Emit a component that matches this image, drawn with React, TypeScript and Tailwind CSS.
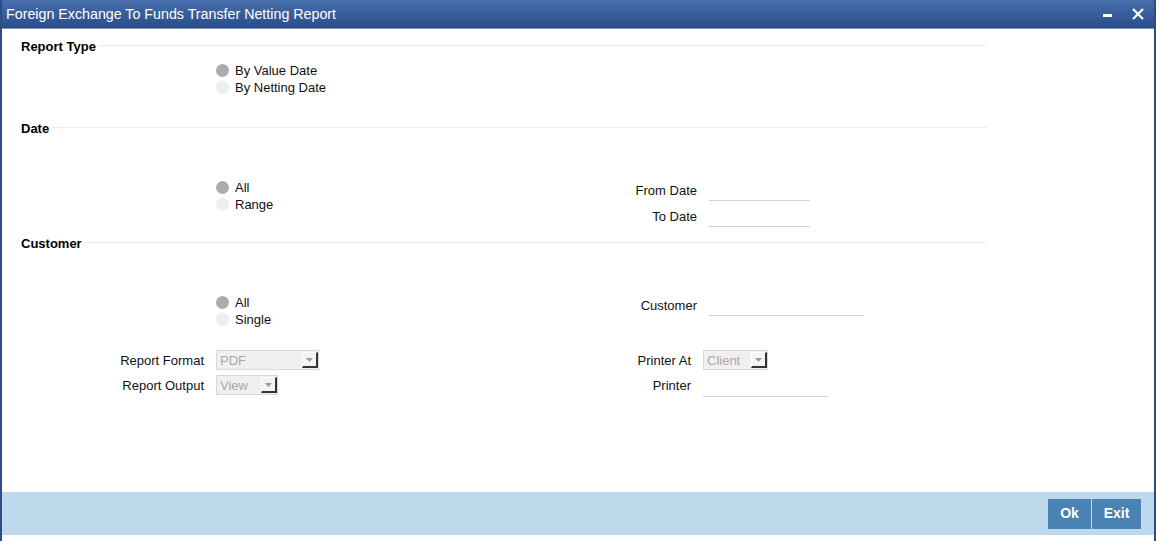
import React from "react";

const font = { fontFamily: '"Liberation Sans", Arial, sans-serif' };

function Heading({ text }: { text: string }) {
  return (
    <div className="flex items-center h-[18px] w-[985px] pl-[19px]">
      <span className="text-[13px] font-bold text-black leading-none whitespace-nowrap">{text}</span>
      <div className="flex-1 h-px bg-[#ececec] ml-[3px] -mt-[1px]" />
    </div>
  );
}

function Radio({ label, checked }: { label: string; checked?: boolean }) {
  return (
    <div className="flex items-center h-[17px]">
      <div className={`w-[13px] h-[13px] rounded-full ${checked ? "bg-[#acacac]" : "bg-[#eeeeee]"}`} />
      <span className="ml-[6px] text-[13px] text-[#111] leading-none whitespace-nowrap">{label}</span>
    </div>
  );
}

function Select({ value, width }: { value: string; width: string }) {
  return (
    <div className={`flex items-stretch h-[20px] ${width} bg-[#f0f0f0] border border-[#d8d8d8]`}>
      <div className="flex-1 flex items-center pl-[3px] text-[13px] text-[#a8a8a8] leading-none">{value}</div>
      <div className="w-[16px] my-[1px] mr-0 flex items-center justify-center bg-[#f4f4f4] border-l border-t border-l-white border-t-white border-r-2 border-b-2 border-r-[#333] border-b-[#333]">
        <svg width="7" height="4" viewBox="0 0 7 4"><path d="M0 0 L7 0 L3.5 4 Z" fill="#9a9a9a" /></svg>
      </div>
    </div>
  );
}

function FieldRow({ label, labelW, inputW }: { label: string; labelW: string; inputW: string }) {
  return (
    <div className="flex items-center h-[26px]">
      <div className={`${labelW} text-right text-[13px] text-[#111] leading-none whitespace-nowrap`}>{label}</div>
      <div className={`ml-[12px] ${inputW} h-[22px] border-b border-[#d2d2d2] -mt-[1px]`} />
    </div>
  );
}

export default function App() {
  return (
    <div style={font} className="w-[1156px] h-[541px] flex flex-col bg-white border-l-2 border-r-2 border-[#2b4c86] overflow-hidden">
      <div className="h-[29px] flex items-center justify-between bg-gradient-to-b from-[#4770ab] to-[#2a4c8a] border-b border-[#7f95b3] pl-[4px] pr-[10px] shrink-0">
        <span className="text-white text-[14.25px] leading-none whitespace-nowrap">Foreign Exchange To Funds Transfer Netting Report</span>
        <div className="flex items-center gap-[20px]">
          <div className="w-[9px] h-[3px] bg-white mt-[2px]" />
          <svg width="12" height="12" viewBox="0 0 12 12">
            <path d="M1 1 L11 11 M11 1 L1 11" stroke="white" strokeWidth="2.2" />
          </svg>
        </div>
      </div>

      <div className="flex-1 flex flex-col pt-[8px]">
        <Heading text="Report Type" />
        <div className="mt-[7px] pl-[214px]">
          <Radio label="By Value Date" checked />
          <Radio label="By Netting Date" />
        </div>

        <div className="mt-[23px]">
          <Heading text="Date" />
        </div>
        <div className="mt-[40px] flex">
          <div className="w-[598px] pl-[214px] pt-[2px]">
            <Radio label="All" checked />
            <Radio label="Range" />
          </div>
          <div>
            <FieldRow label="From Date" labelW="w-[97px]" inputW="w-[101px]" />
            <FieldRow label="To Date" labelW="w-[97px]" inputW="w-[101px]" />
          </div>
        </div>

        <div className="mt-[5px]">
          <Heading text="Customer" />
        </div>
        <div className="mt-[40px] flex">
          <div className="w-[598px] pl-[214px] pt-[2px]">
            <Radio label="All" checked />
            <Radio label="Single" />
          </div>
          <div>
            <FieldRow label="Customer" labelW="w-[97px]" inputW="w-[155px]" />
          </div>
        </div>

        <div className="mt-[20px] flex">
          <div className="w-[598px]">
            <div className="flex items-center h-[25px]">
              <div className="w-[202px] text-right text-[13px] text-[#111] leading-none">Report Format</div>
              <div className="ml-[12px] -mt-[1px]"><Select value="PDF" width="w-[103px]" /></div>
            </div>
            <div className="flex items-center h-[25px]">
              <div className="w-[202px] text-right text-[13px] text-[#111] leading-none">Report Output</div>
              <div className="ml-[12px] -mt-[1px]"><Select value="View" width="w-[62px]" /></div>
            </div>
          </div>
          <div>
            <div className="flex items-center h-[25px]">
              <div className="w-[91px] text-right text-[13px] text-[#111] leading-none">Printer At</div>
              <div className="ml-[12px] -mt-[1px]"><Select value="Client" width="w-[65px]" /></div>
            </div>
            <div className="flex items-center h-[25px]">
              <div className="w-[91px] text-right text-[13px] text-[#111] leading-none">Printer</div>
              <div className="ml-[12px] w-[125px] h-[22px] border-b border-[#d2d2d2]" />
            </div>
          </div>
        </div>
      </div>

      <div className="h-[43px] bg-[#bfd9ec] flex items-center justify-end pr-[13px] shrink-0">
        <div className="flex gap-px">
          <div className="w-[43px] h-[30px] bg-[#4a82b3] text-white text-[14px] font-bold flex items-center justify-center">Ok</div>
          <div className="w-[49px] h-[30px] bg-[#4a82b3] text-white text-[14px] font-bold flex items-center justify-center">Exit</div>
        </div>
      </div>
      <div className="h-[6px] shrink-0" />
    </div>
  );
}
